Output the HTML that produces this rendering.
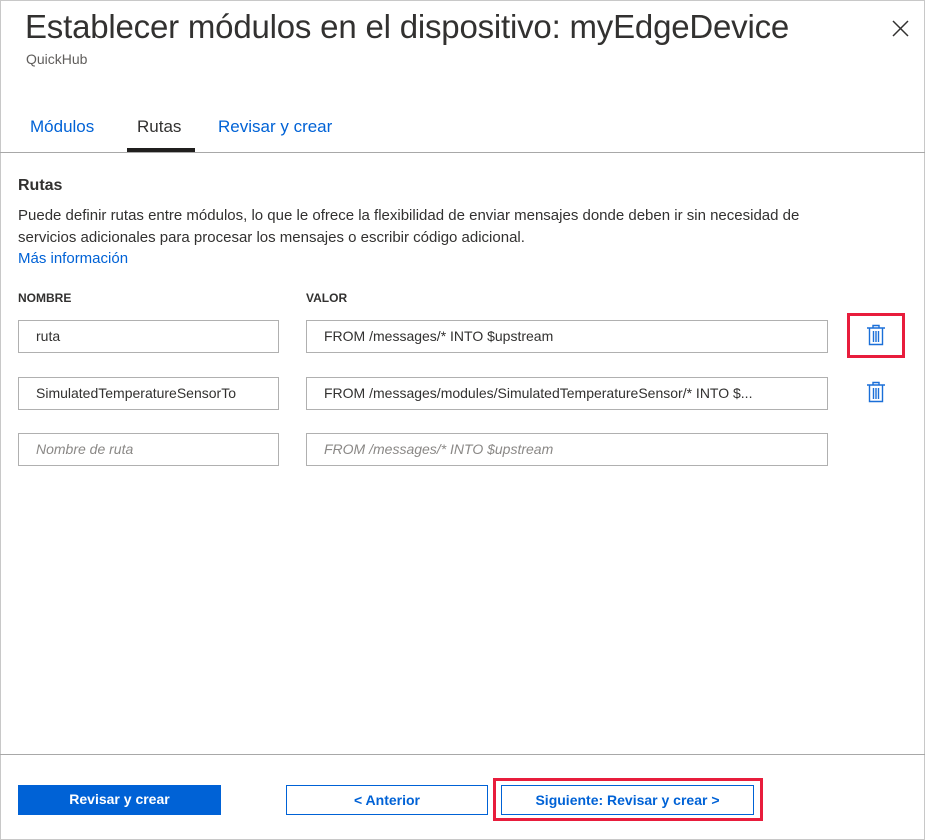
<!DOCTYPE html>
<html><head><meta charset="utf-8"><style>
*{box-sizing:border-box;margin:0;padding:0}
body{width:925px;height:840px;background:#fff;font-family:"Liberation Sans",sans-serif;color:#323130;position:relative;overflow:hidden}
.a{position:absolute;white-space:nowrap}
.inp{position:absolute;height:33px;border:1px solid #b0b0b0;font-size:14px;padding:0 0 0 17px;line-height:31px;color:#323130;white-space:nowrap;overflow:hidden}
.ph{color:#8a8886;font-style:italic}
.btn{position:absolute;height:30px;font-size:14px;font-weight:bold;text-align:center;line-height:28px}
</style></head><body>
<div class="a" style="left:0;top:0;width:925px;height:840px;border:1px solid #c8c8c8"></div>
<div class="a" style="left:25px;top:8px;font-size:33px;color:#323130;letter-spacing:-0.2px">Establecer módulos en el dispositivo: myEdgeDevice</div>
<div class="a" style="left:26px;top:51px;font-size:14px;color:#605e5c">QuickHub</div>
<svg class="a" style="left:892px;top:20px" width="17" height="17"><path d="M1 1L16 16M16 1L1 16" stroke="#323130" stroke-width="1.5"/></svg>
<div class="a" style="left:30px;top:117px;font-size:17px;color:#0062d6">Módulos</div>
<div class="a" style="left:137px;top:117px;font-size:17px;color:#323130">Rutas</div>
<div class="a" style="left:218px;top:117px;font-size:17px;color:#0062d6">Revisar y crear</div>
<div class="a" style="left:127px;top:148px;width:68px;height:4px;background:#201f1e"></div>
<div class="a" style="left:0;top:152px;width:925px;height:1px;background:#a8a8a8"></div>
<div class="a" style="left:18px;top:177px;font-size:16px;font-weight:bold;color:#323130">Rutas</div>
<div class="a" style="left:18px;top:205px;font-size:15px;line-height:22px;white-space:normal;width:830px">Puede definir rutas entre módulos, lo que le ofrece la flexibilidad de enviar mensajes donde deben ir sin necesidad de servicios adicionales para procesar los mensajes o escribir código adicional.</div>
<div class="a" style="left:18px;top:250px;font-size:15px;color:#0062d6">Más información</div>
<div class="a" style="left:18px;top:291px;font-size:12px;font-weight:bold">NOMBRE</div>
<div class="a" style="left:306px;top:291px;font-size:12px;font-weight:bold">VALOR</div>
<div class="inp" style="left:18px;top:320px;width:261px">ruta</div>
<div class="inp" style="left:306px;top:320px;width:522px">FROM /messages/* INTO $upstream</div>
<div class="inp" style="left:18px;top:377px;width:261px">SimulatedTemperatureSensorTo</div>
<div class="inp" style="left:306px;top:377px;width:522px">FROM /messages/modules/SimulatedTemperatureSensor/* INTO $...</div>
<div class="inp ph" style="left:18px;top:433px;width:261px">Nombre de ruta</div>
<div class="inp ph" style="left:306px;top:433px;width:522px">FROM /messages/* INTO $upstream</div>
<div class="a" style="left:847px;top:313px;width:58px;height:45px;border:3px solid #e81d3c"></div>
<svg class="a" style="left:866px;top:324px" width="20" height="22" viewBox="0 0 20 22"><g fill="none" stroke="#1a6fd8" stroke-width="1.4"><path d="M1 4H19M7 4V1.5H13V4M3.5 4V20.5H16.5V4M7.5 7V18M10 7V18M12.5 7V18"/></g></svg>
<svg class="a" style="left:866px;top:381px" width="20" height="22" viewBox="0 0 20 22"><g fill="none" stroke="#1a6fd8" stroke-width="1.4"><path d="M1 4H19M7 4V1.5H13V4M3.5 4V20.5H16.5V4M7.5 7V18M10 7V18M12.5 7V18"/></g></svg>
<div class="a" style="left:0;top:754px;width:925px;height:1px;background:#a8a8a8"></div>
<div class="btn" style="left:18px;top:785px;width:203px;background:#0062d6;color:#fff">Revisar y crear</div>
<div class="btn" style="left:286px;top:785px;width:202px;border:1px solid #0062d6;color:#0062d6">&lt; Anterior</div>
<div class="a" style="left:493px;top:778px;width:270px;height:43px;border:3px solid #e81d3c"></div>
<div class="btn" style="left:501px;top:785px;width:253px;border:1px solid #0062d6;color:#0062d6">Siguiente: Revisar y crear &gt;</div>
</body></html>
